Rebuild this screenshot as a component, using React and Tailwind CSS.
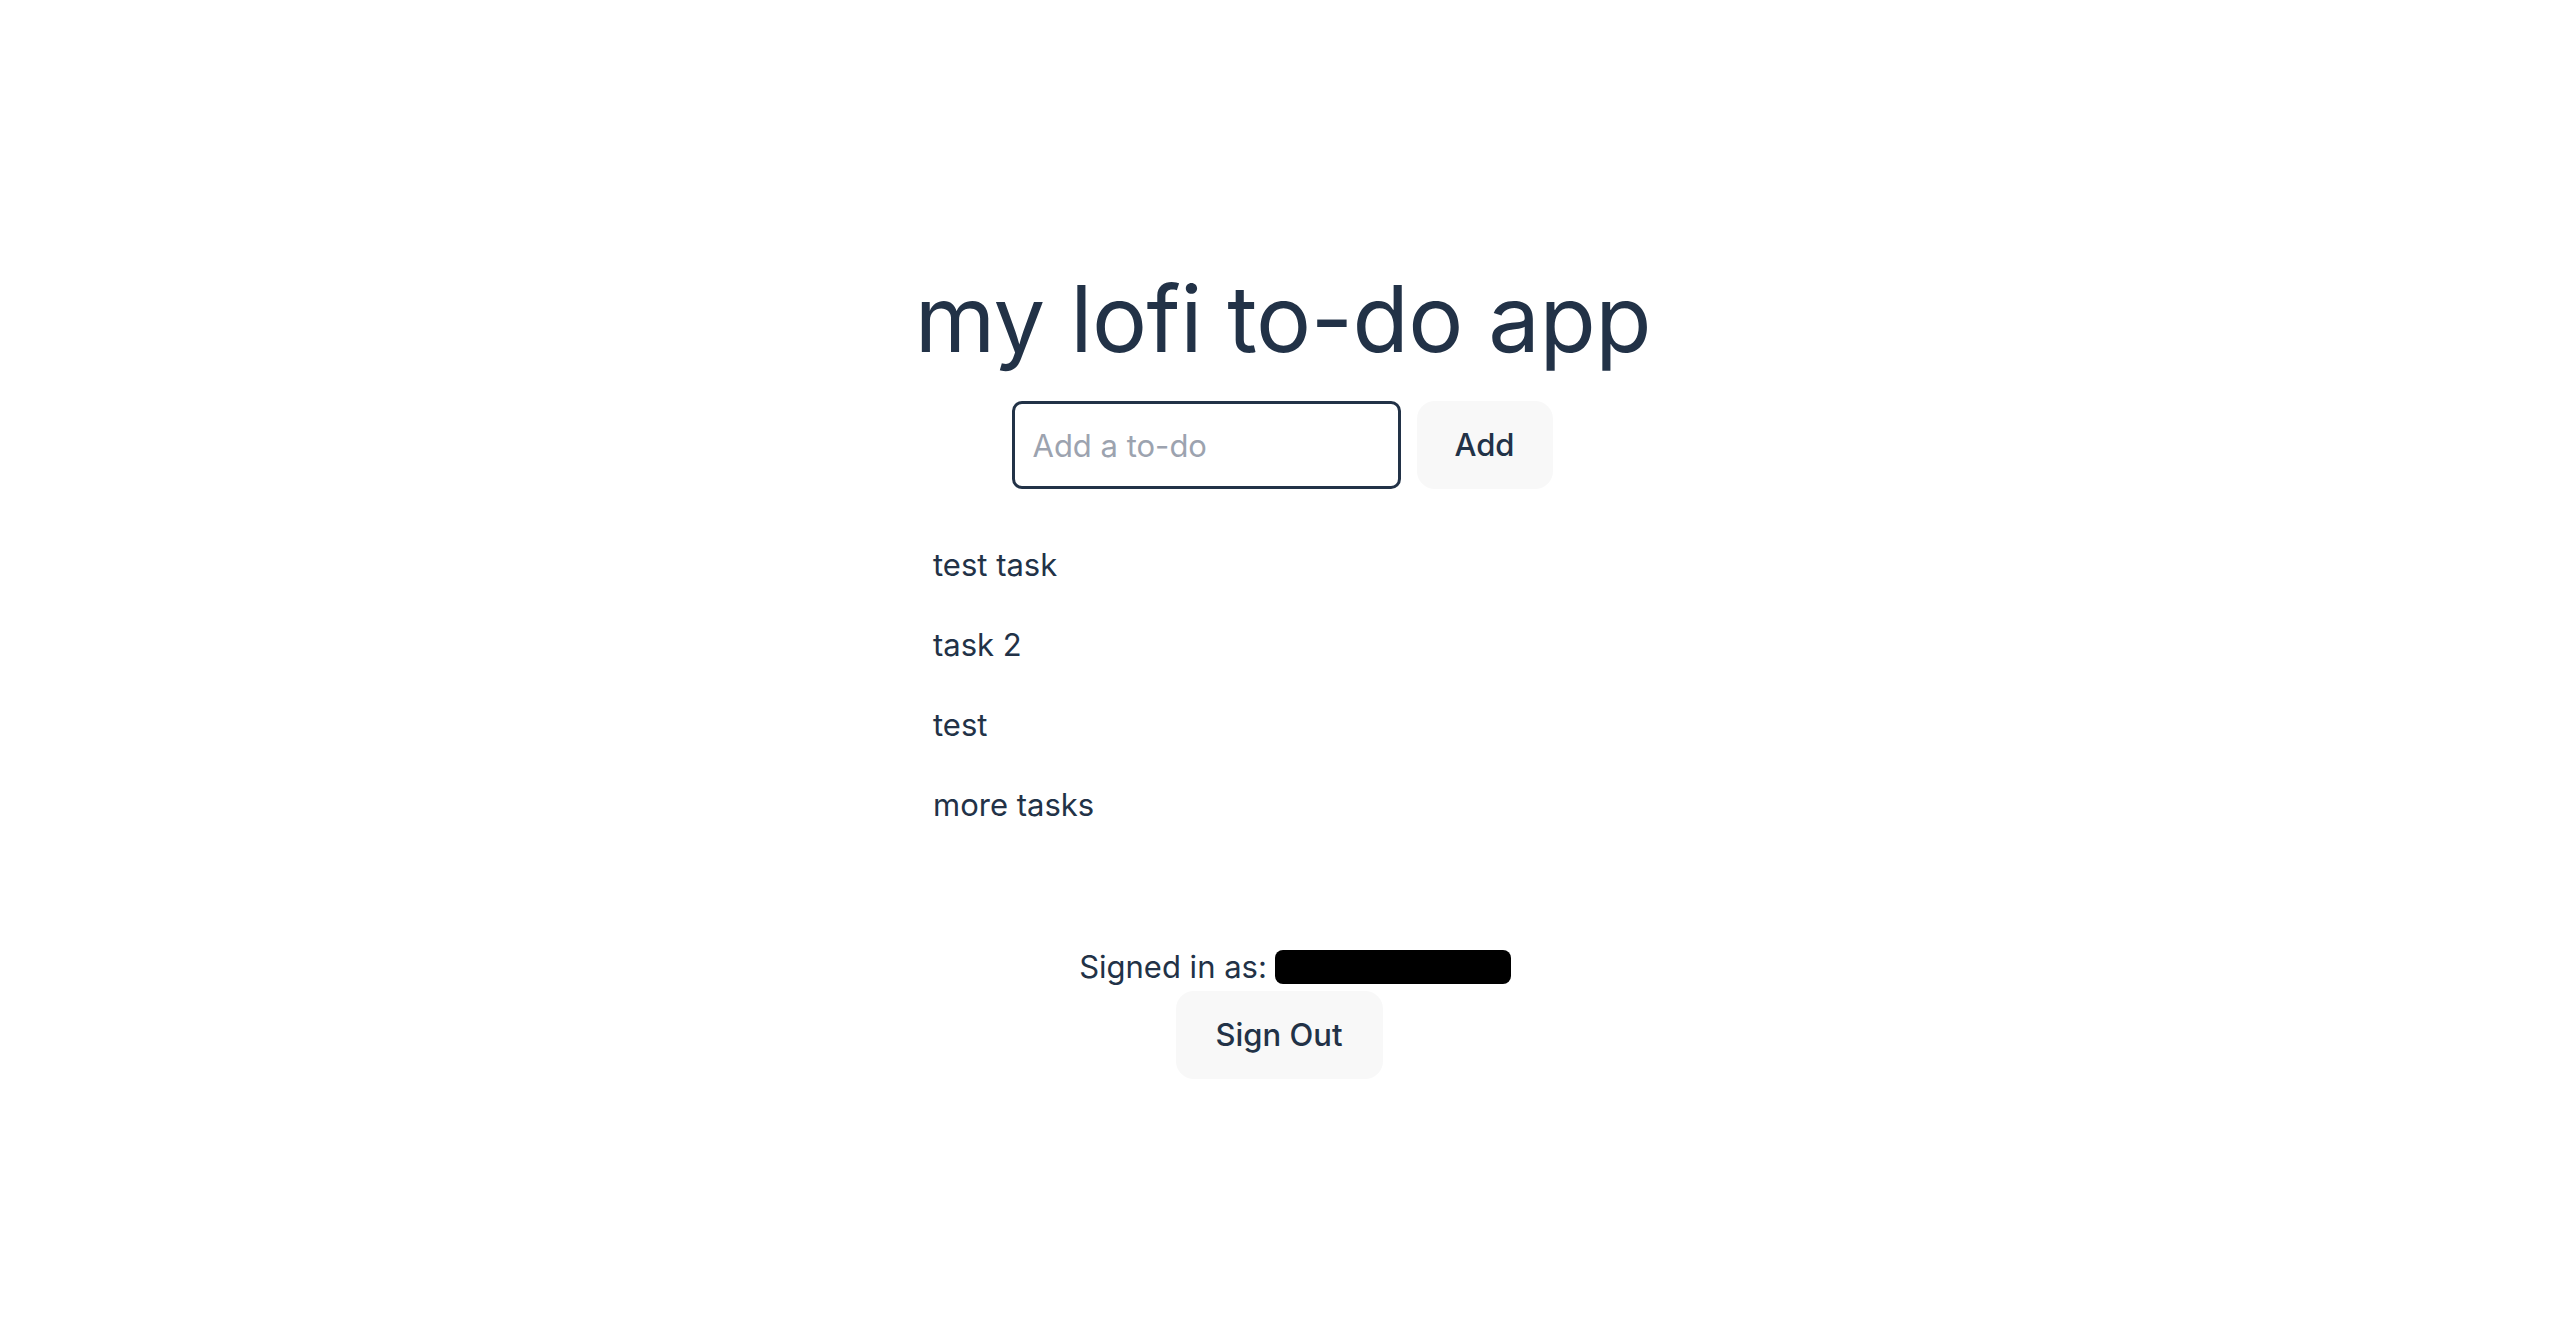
import { useState } from "react"

const tasks = ["test task", "task 2", "test", "more tasks"]

export default function App() {
  const [todo, setTodo] = useState("")

  return (
    <div className="min-h-screen bg-white text-[#223247] font-['Inter','Liberation_Sans',sans-serif] flex flex-col items-center pt-[273px]">
      {/* Title */}
      <h1 className="text-[92px] leading-none font-normal tracking-[-0.5px] translate-x-[4px]">my lofi to-do app</h1>

      {/* New to-do */}
      <form className="flex items-center gap-4 mt-[36px] ml-[6px]" onSubmit={(e) => e.preventDefault()}>
        <input
          value={todo}
          onChange={(e) => setTodo(e.target.value)}
          placeholder="Add a to-do"
          className="w-[389px] h-[88px] px-[18px] text-[31px] border-[3px] border-[#223247] rounded-[10px] outline-none placeholder:text-[#9ca3af]"
        />
        <button className="w-[136px] h-[88px] rounded-[18px] bg-[#f8f8f8] text-[31px] font-medium">Add</button>
      </form>

      {/* List */}
      <ul className="w-[692px] mt-[52px] flex flex-col gap-8">
        {tasks.map((t) => (
          <li key={t} className="text-[31px] leading-[48px]">{t}</li>
        ))}
      </ul>

      {/* Account */}
      <div className="mt-[114px] flex flex-col items-center">
        <p className="text-[31px] leading-[48px] flex items-center gap-2">
          Signed in as:
          {/* redacted email */}
          <span className="inline-block w-[236px] h-[34px] rounded-[8px] bg-black mr-[-32px]" />
        </p>
        <button className="w-[207px] h-[88px] rounded-[18px] bg-[#f8f8f8] text-[31px] font-medium">Sign Out</button>
      </div>
    </div>
  )
}
